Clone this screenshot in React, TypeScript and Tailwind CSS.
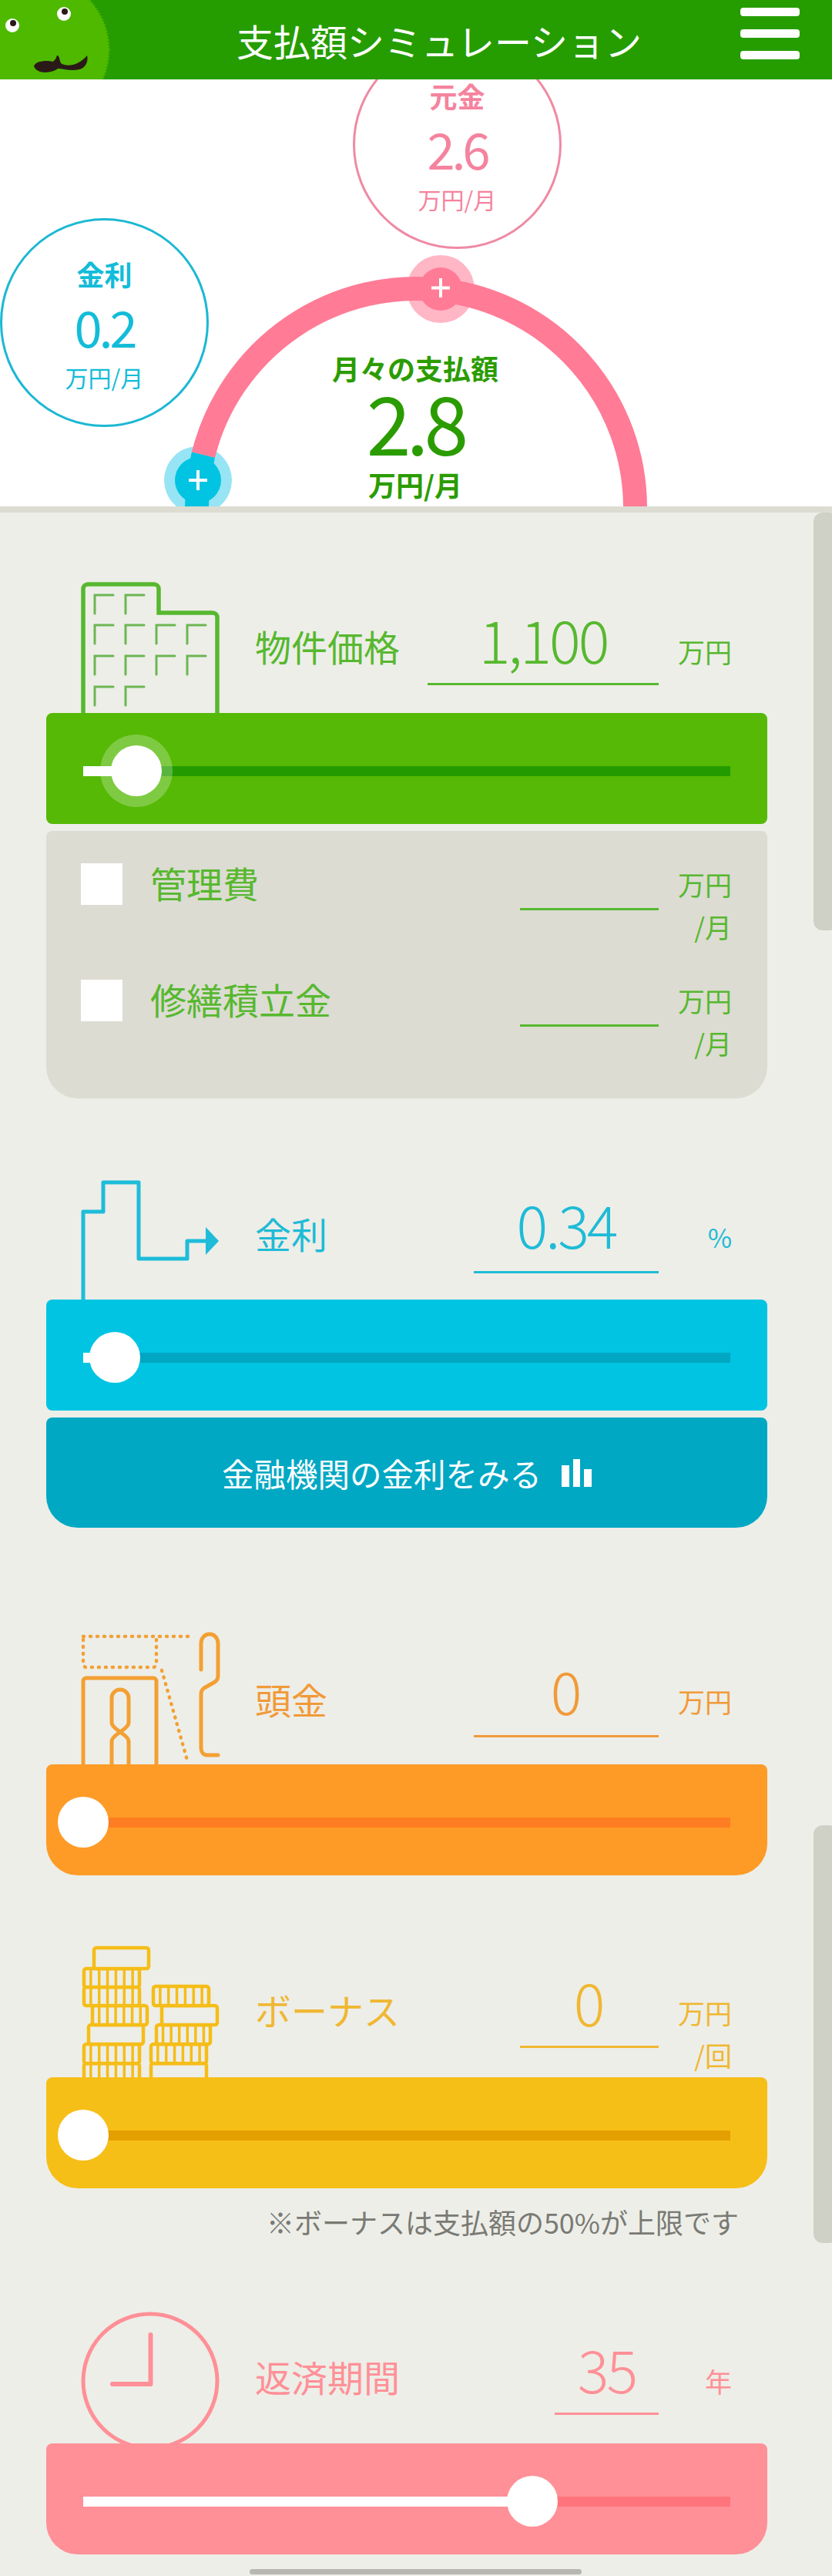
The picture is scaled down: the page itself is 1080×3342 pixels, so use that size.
import React from "react";

function Slider({ pos, panel, track, round, halo }: { pos: number; panel: string; track: string; round: string; halo?: boolean }) {
  return (
    <div className={"flex h-[144px] w-[936px] items-center px-[48px] pt-[6px] " + panel + " " + round}>
      <div className={"relative h-[13px] w-[840px] " + track}>
        <div className="absolute top-0 left-0 h-full bg-white" style={{ width: pos }} />
        {halo && <div className="absolute top-1/2 h-[94px] w-[94px] -translate-x-1/2 -translate-y-1/2 rounded-full bg-white/25" style={{ left: pos }} />}
        <div className="absolute top-1/2 h-[66px] w-[66px] -translate-x-1/2 -translate-y-1/2 rounded-full bg-white" style={{ left: pos }} />
      </div>
    </div>
  );
}

function Building() {
  const rows = [[123, 163], [123, 163, 203, 243], [123, 163, 203, 243], [123, 163]];
  const ys = [772, 811, 851, 891];
  return (
    <svg width="190" height="170" viewBox="100 755 190 170" fill="none" className="shrink-0">
      <path d="M108 925V764a6 6 0 0 1 6-6h86a6 6 0 0 1 6 6v31h70a6 6 0 0 1 6 6v124" stroke="#57b82f" strokeWidth="5.5" />
      {rows.map((r, i) =>
        r.map((x) => <path key={x + "-" + i} d={`M${x} ${ys[i] + 24}V${ys[i]}h24`} stroke="#6db653" strokeWidth="3" strokeLinecap="round" />)
      )}
    </svg>
  );
}

function Step() {
  return (
    <svg width="190" height="156" viewBox="100 1530 190 156" fill="none" className="shrink-0">
      <path d="M108 1686V1572h26v-38h46v99h63v-23h26" stroke="#1ebcd9" strokeWidth="5" strokeLinejoin="round" />
      <path d="M267 1592l17 18-17 18z" fill="#1ebcd9" />
    </svg>
  );
}

function Down() {
  return (
    <svg width="190" height="174" viewBox="100 2115 190 174" fill="none" className="shrink-0">
      <path d="M108 2289V2181a4 4 0 0 1 4-4h87a4 4 0 0 1 4 4v108" stroke="#f3a033" strokeWidth="5" />
      <path d="M145 2235V2203a11 11 0 0 1 22 0V2235c0 5-7 9-11 12c-4-3-11-7-11-12ZM145 2289V2259c0-5 7-9 11-12c4 3 11 7 11 12V2289" stroke="#f3a033" strokeWidth="5" />
      <path d="M108 2127v32a4 4 0 0 0 4 4h87a4 4 0 0 0 4-4v-32M108 2123h139" stroke="#f3a033" strokeWidth="4.500" strokeDasharray="1 8" strokeLinecap="round" />
      <path d="M210 2167L244 2287" stroke="#f3a033" strokeWidth="4.500" strokeDasharray="1 8" strokeLinecap="round" />
      <path d="M261 2166v-34c0-7 5-12 11-12s11 5 11 12v42c0 4-1 6-4 8l-14 8c-3 2-4 4-4 8v70c0 5 3 9 8 9h14" stroke="#f3a033" strokeWidth="5" strokeLinecap="round" />
    </svg>
  );
}

function Coin({ x, y, w, h, ribbed }: { x: number; y: number; w: number; h: number; ribbed?: boolean }) {
  const ribs = [];
  if (ribbed) for (let i = 1; i <= 6; i++) ribs.push(x + (w / 7) * i);
  return (
    <g>
      <rect x={x + 2} y={y + 2} width={w - 4} height={h} rx="3" fill="#edeee8" stroke="#f5bd17" strokeWidth="4.5" />
      {ribs.map((r) => <path key={r} d={`M${r} ${y + 2}v${h}`} stroke="#f5bd17" strokeWidth="3.5" />)}
    </g>
  );
}

function Coins() {
  return (
    <svg width="190" height="175" viewBox="100 2520 190 175" fill="none" className="shrink-0">
      <Coin x={107} y={2675} w={76} h={26} ribbed />
      <Coin x={107} y={2650} w={76} h={25} ribbed />
      <Coin x={113} y={2625} w={75} h={25} />
      <Coin x={118} y={2600} w={75} h={25} ribbed />
      <Coin x={107} y={2576} w={76} h={24} ribbed />
      <Coin x={107} y={2552} w={76} h={24} ribbed />
      <Coin x={120} y={2525} w={75} h={27} />
      <Coin x={194} y={2675} w={76} h={26} />
      <Coin x={194} y={2650} w={76} h={25} ribbed />
      <Coin x={201} y={2625} w={74} h={25} ribbed />
      <Coin x={208} y={2600} w={76} h={25} />
      <Coin x={197} y={2575} w={76} h={25} ribbed />
    </svg>
  );
}

function Clock() {
  return (
    <svg width="190" height="171" viewBox="100 2999 190 171" fill="none" className="shrink-0">
      <circle cx="195" cy="3089" r="87" stroke="#ff9097" strokeWidth="5" />
      <path d="M195.500 3029V3093H146" stroke="#ff9097" strokeWidth="6" strokeLinecap="round" strokeLinejoin="round" />
    </svg>
  );
}

function Stat({ pos, ring, text, label, value }: { pos: string; ring: string; text: string; label: string; value: string }) {
  return (
    <div className={"absolute flex h-[271px] w-[271px] flex-col items-center rounded-full border-[3px] pt-[47px] " + pos + " " + ring + " " + text}>
      <div className="text-[36px] leading-[44px] font-bold">{label}</div>
      <div className="mt-[11px] text-[65px] leading-[70px] font-normal tracking-[-4px]">{value}</div>
      <div className="mt-[13px] text-[30px] leading-[36px] font-normal">万円/月</div>
    </div>
  );
}

export default function App() {
  return (
    <div className="relative h-[3342px] w-[1080px] overflow-hidden bg-[#edeee8] font-['Noto_Sans_CJK_JP','Noto_Sans',sans-serif] font-normal">
      <header className="relative flex h-[103px] items-center justify-center overflow-hidden bg-[#259d00] pl-[60px]">
        <svg width="150" height="103" viewBox="0 0 150 103" className="absolute top-0 left-0">
          <circle cx="47" cy="64.500" r="94" fill="#4fb900" stroke="#4fb900" strokeWidth="3" strokeDasharray="2 2" />
          <circle cx="83" cy="18" r="9" fill="#fff" />
          <circle cx="84" cy="15" r="4" fill="#2a1a17" />
          <circle cx="16" cy="33" r="9" fill="#fff" />
          <circle cx="17" cy="30" r="4" fill="#2a1a17" />
          <path d="M44 86C46 79 60 78 68 80C72 79 73 74 74 72C77 71 77 77 79 82C88 88 103 84 113 72C115 78 112 88 103 90C92 93 82 89 75 89C68 95 48 97 44 86Z" fill="#2a1a17" />
        </svg>
        <h1 className="text-[48px] leading-[60px] font-normal text-white">支払額シミュレーション</h1>
        <div className="absolute top-[10px] right-[42px] flex flex-col gap-[17px]">
          <div className="h-[11px] w-[77px] rounded-[4px] bg-white" />
          <div className="h-[11px] w-[77px] rounded-[4px] bg-white" />
          <div className="h-[11px] w-[77px] rounded-[4px] bg-white" />
        </div>
      </header>

      <section className="relative h-[554px] overflow-hidden bg-white">
        <Stat pos="top-[-51px] left-[458px]" ring="border-[#ef8aa4]" text="text-[#f5839e]" label="元金" value="2.6" />
        <Stat pos="top-[180px] left-0" ring="border-[#1cb8d3]" text="text-[#13bcd8]" label="金利" value="0.2" />
        <svg width="1080" height="554" viewBox="0 103 1080 554" fill="none" className="absolute top-0 left-0">
          <circle cx="257" cy="623" r="44" fill="#97e4f4" />
          <circle cx="572" cy="375" r="44" fill="#ffb6c5" />
          <path d="M264 590A284.500 284.500 0 0 0 255.500 658" stroke="#00c4e2" strokeWidth="31" />
          <path d="M264 590A284.500 284.500 0 0 1 824.500 658" stroke="#ff7b96" strokeWidth="31" />
          <circle cx="572" cy="375" r="28" fill="#ff7b96" />
          <circle cx="257" cy="623" r="30" fill="#00c4e2" />
          <path d="M572 361v25M560 373.500h24" stroke="#fff" strokeWidth="4" />
          <path d="M257 610v26M245 623h24" stroke="#fff" strokeWidth="4" />
        </svg>
        <div className="absolute top-[349px] left-[389px] flex w-[300px] flex-col items-center text-[#2b9c00]">
          <div className="text-[36px] leading-[50px] font-bold">月々の支払額</div>
          <div className="pt-[2px] text-[104px] leading-[84px] tracking-[-6px]">2.8</div>
          <div className="mt-[15px] text-[36px] leading-[50px] font-bold">万円/月</div>
        </div>
      </section>

      <main className="border-t-[8px] border-[#dcdcd2] px-[60px]">
        <div className="flex h-[260px] w-[936px] items-start pr-[48px] text-[#57b82f]">
          <div className="mt-[90px] ml-[40px]"><Building /></div>
          <div className="mt-[143px] ml-[41px] flex-1 text-[47px] leading-[60px]">物件価格</div>
          <div className="mt-[125px] w-[300px] border-b-[3px] border-[#57b82f] pb-[20px] text-center text-[76px] leading-[76px] font-light tracking-[-3px]">1,100</div>
          <div className="mt-[160px] w-[93px] translate-x-[2px] text-right text-[35px] leading-[40px]">万円</div>
        </div>
        <Slider pos={69} panel="bg-[#55b905]" track="bg-[#239b00]" round="rounded-[8px]" halo />
        <div className="mt-[9px] h-[347px] w-[936px] rounded-t-[8px] rounded-b-[41px] bg-[#dcdcd2] pt-[42px] pr-[48px] pl-[45px] text-[#57b82f]">
          <div className="flex h-[151px] items-start">
            <div className="h-[54px] w-[54px] bg-white" />
            <div className="-mt-[2px] ml-[36px] flex-1 text-[47px] leading-[54px]">管理費</div>
            <div className="mt-[58px] h-[3px] w-[180px] bg-[#57b82f]" />
            <div className="-mt-[1px] w-[93px] translate-x-[2px] text-right text-[35px] leading-[55px]">万円<br />/月</div>
          </div>
          <div className="flex h-[151px] items-start">
            <div className="h-[54px] w-[54px] bg-white" />
            <div className="-mt-[2px] ml-[36px] flex-1 text-[47px] leading-[54px]">修繕積立金</div>
            <div className="mt-[58px] h-[3px] w-[180px] bg-[#57b82f]" />
            <div className="-mt-[1px] w-[93px] translate-x-[2px] text-right text-[35px] leading-[55px]">万円<br />/月</div>
          </div>
        </div>

        <div className="flex h-[261px] w-[936px] items-start pr-[48px] text-[#1fbbd6]">
          <div className="mt-[105px] ml-[40px]"><Step /></div>
          <div className="mt-[145px] ml-[41px] flex-1 text-[47px] leading-[60px]">金利</div>
          <div className="mt-[124px] w-[240px] border-b-[3px] border-[#1fbbd6] pb-[24px] text-center text-[76px] leading-[76px] font-light tracking-[-3px]">0.34</div>
          <div className="mt-[160px] w-[93px] translate-x-[2px] text-right text-[34px] leading-[40px]">%</div>
        </div>
        <Slider pos={41} panel="bg-[#00c4e2]" track="bg-[#00a6c2]" round="rounded-[8px]" />
        <div className="mt-[9px] flex h-[143px] w-[936px] items-center justify-center rounded-t-[8px] rounded-b-[41px] bg-[#00a8c4] text-[41.500px] text-white">
          <span className="leading-[60px]">金融機関の金利をみる</span>
          <svg width="39" height="36" viewBox="0 0 39 36" className="ml-[26px]" fill="#fff">
            <rect x="0" y="8" width="10" height="28" />
            <rect x="15" y="0" width="9" height="36" />
            <rect x="29" y="13" width="10" height="23" />
          </svg>
        </div>

        <div className="flex h-[307px] w-[936px] items-start pr-[48px] text-[#f19a38]">
          <div className="mt-[133px] ml-[40px]"><Down /></div>
          <div className="mt-[192px] ml-[41px] flex-1 text-[47px] leading-[60px]">頭金</div>
          <div className="mt-[172px] w-[240px] border-b-[3px] border-[#f19a38] pb-[21px] text-center text-[76px] leading-[76px] font-light">0</div>
          <div className="mt-[205px] w-[93px] translate-x-[2px] text-right text-[35px] leading-[40px]">万円</div>
        </div>
        <Slider pos={0} panel="bg-[#fd9b26]" track="bg-[#ff7d22]" round="rounded-t-[8px] rounded-b-[41px]" />

        <div className="flex h-[262px] w-[936px] items-start pr-[48px] text-[#f0b731]">
          <div className="mt-[87px] ml-[40px]"><Coins /></div>
          <div className="mt-[144px] ml-[41px] flex-1 text-[47px] leading-[60px]">ボーナス</div>
          <div className="mt-[125px] w-[180px] border-b-[3px] border-[#f0b731] pb-[20px] text-center text-[76px] leading-[76px] font-light">0</div>
          <div className="mt-[150px] w-[93px] translate-x-[2px] text-right text-[35px] leading-[55px]">万円<br />/回</div>
        </div>
        <Slider pos={0} panel="bg-[#f6bf17]" track="bg-[#e49f00]" round="rounded-t-[8px] rounded-b-[41px]" />
        <div className="mt-[21px] pr-[61px] text-right text-[36px] leading-[44px] text-[#7a7a74]">※ボーナスは支払額の50%が上限です</div>

        <div className="flex h-[266px] w-[936px] items-start pr-[48px] text-[#ff9097]">
          <div className="mt-[95px] ml-[40px]"><Clock /></div>
          <div className="mt-[149px] ml-[41px] flex-1 text-[47px] leading-[60px]">返済期間</div>
          <div className="mt-[130px] w-[135px] border-b-[3px] border-[#ff9097] pb-[20px] text-center text-[76px] leading-[76px] font-light tracking-[-3px]">35</div>
          <div className="mt-[165px] w-[93px] translate-x-[2px] text-right text-[35px] leading-[40px]">年</div>
        </div>
        <Slider pos={583} panel="bg-[#ff9097]" track="bg-[#ff747c]" round="rounded-t-[8px] rounded-b-[41px]" />
      </main>

      <div className="absolute top-[665px] right-0 h-[542px] w-[24px] rounded-l-[12px] rounded-r-[2px] bg-[#cfd0c6]" />
      <div className="absolute top-[2368px] right-0 h-[542px] w-[24px] rounded-l-[12px] rounded-r-[2px] bg-[#cfd0c6]" />
      <div className="absolute top-[3333px] left-[324px] h-[7px] w-[431px] rounded-full bg-[#b8b8b0]" />
    </div>
  );
}
